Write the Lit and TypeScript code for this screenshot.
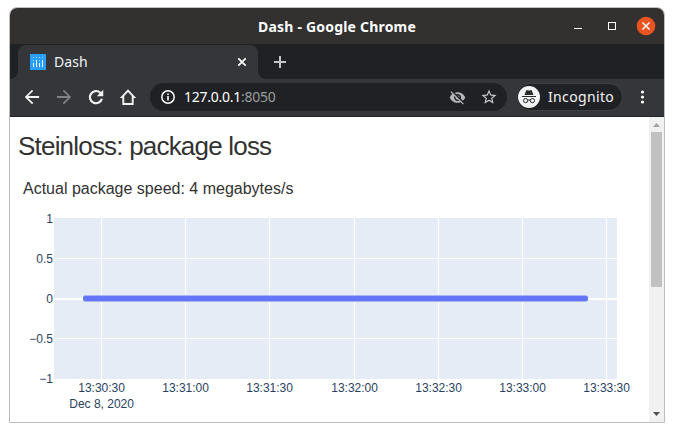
import { LitElement, html, css, svg } from "lit";
import { customElement } from "lit/decorators.js";

@customElement("loss-chart")
class LossChart extends LitElement {
  static styles = css`
    :host { display: block; }
    svg { display: block; }
    text { font: 12px "Liberation Sans", Arial, sans-serif; fill: #2a3f5f; }
    .mid { text-anchor: middle; }
    .end { text-anchor: end; }
    .plot { fill: #e5ecf6; }
    .grid { fill: #fff; }
    .trace { fill: #6376f7; }
    .halo { fill: #a9b5f7; }
  `;

  private xTicks = [
    { x: 91, label: "13:30:30" },
    { x: 175, label: "13:31:00" },
    { x: 259, label: "13:31:30" },
    { x: 344, label: "13:32:00" },
    { x: 428, label: "13:32:30" },
    { x: 512, label: "13:33:00" },
    { x: 596, label: "13:33:30" },
  ];

  private yTicks = [
    { y: 8, label: "1" },
    { y: 48, label: "0.5" },
    { y: 88, label: "0" },
    { y: 128, label: "−0.5" },
    { y: 168, label: "−1" },
  ];

  render() {
    return html`<svg width="639" height="210" viewBox="0 0 639 210">
      <rect class="plot" x="44" y="8" width="563" height="161"></rect>
      ${this.xTicks.map(
        (t) => svg`<rect class="grid" x=${t.x} y="8" width="1" height="161"></rect>
          <text class="mid" x=${t.x + 0.6} y="182">${t.label}</text>`
      )}
      ${this.yTicks.map(
        (t, i) => svg`${i > 0 && i < 4
            ? svg`<rect class="grid" x="44" y=${t.y} width="563" height=${i === 2 ? 2 : 1}></rect>`
            : null}
          <text class="end" x="43" y=${t.y + 4.5}>${t.label}</text>`
      )}
      <text class="mid" x="91.6" y="198">Dec 8, 2020</text>
      <rect class="halo" x="73" y="85" width="505" height="7" rx="3"></rect>
      <rect class="trace" x="73" y="86" width="505" height="5" rx="2"></rect>
    </svg>`;
  }
}

@customElement("app-root")
class AppRoot extends LitElement {
  static styles = css`
    * { box-sizing: border-box; }
    :host {
      display: block; width: 674px; height: 432px; padding: 7px 9px 9px;
      background: #fff; overflow: hidden; box-sizing: border-box;
      font-family: "Noto Sans", sans-serif;
    }
    svg { display: block; flex: none; }
    .window {
      width: 656px; height: 416px; border: 1px solid #bdbdbd;
      border-radius: 8px 8px 0 0; overflow: hidden; background: #fff;
      display: flex; flex-direction: column;
    }
    .titlebar {
      height: 36px; flex: none; background: #333030; color: #fff;
      display: grid; grid-template-columns: 1fr auto 1fr; align-items: center;
    }
    .title { grid-column: 2; font-weight: 700; font-size: 14px; letter-spacing: 0.2px; line-height: 20px; white-space: nowrap; padding-top: 2px; }
    .controls { justify-self: end; margin-right: 0; }
    .tabs { height: 35px; flex: none; background: #202124; display: flex; }
    .corner { width: 8px; background: #35363a; }
    .corner i { display: block; height: 35px; background: #202124; }
    .corner.left i { border-bottom-right-radius: 8px; }
    .corner.right i { border-bottom-left-radius: 8px; }
    .tab {
      width: 240px; background: #35363a; margin-top: 1px; height: 34px;
      border-radius: 8px 8px 0 0; display: flex; align-items: center;
      padding: 0 11px 0 12px; color: #f1f3f4;
    }
    .tabname { font-size: 14px; letter-spacing: 0.05px; margin-left: 8px; flex: 1; line-height: 20px; }
    .plus { margin: 11px 0 0 8px; }
    .toolbar {
      height: 38px; flex: none; background: #35363a; border-bottom: 1px solid #232427;
      display: flex; align-items: center; padding-bottom: 1px;
    }
    .nav { display: flex; gap: 12px; padding-left: 12px; width: 140px; }
    .address {
      width: 357px; height: 28px; border-radius: 14px; background: #202124;
      display: flex; align-items: center; padding: 0 9px 0 10px; color: #9aa0a6;
    }
    .url { font-size: 14px; letter-spacing: -0.25px; flex: 1; line-height: 20px; margin-left: 8px; color: #fff; }
    .port { color: #9a9c9f; }
    .star { margin-left: 14px; }
    .incognito {
      margin-left: 9px; width: 107px; height: 28px; border-radius: 14px;
      background: #202124; border: 1px solid #3f4044; color: #f1f3f4;
      display: flex; align-items: center; padding-left: 1px;
    }
    .label { font-size: 14px; letter-spacing: 0.35px; margin-left: 8px; line-height: 20px; }
    .menu { margin-left: 16px; }
    .body { flex: 1; display: flex; min-height: 0; }
    .page {
      flex: 1; min-width: 0; font-family: "Liberation Sans", Arial, sans-serif; color: #323232;
      display: flex; flex-direction: column;
    }
    h1 { margin: 0; padding: 13px 0 0 8px; font-size: 26px; font-weight: 400; letter-spacing: -0.8px; line-height: 32px; }
    p { margin: 0; padding: 16px 0 0 13px; font-size: 16px; line-height: 22px; height: 48px; }
    .scroll { width: 15px; background: #f1f1f1; display: flex; flex-direction: column; align-items: center; }
    .thumb { width: 11px; height: 155px; background: #c1c1c1; }
    .gap { flex: 1; }
  `;

  render() {
    return html`<div class="window">
      <div class="titlebar">
        <div class="title">Dash - Google Chrome</div>
        <svg class="controls" width="92" height="36" viewBox="0 0 92 36" fill="none">
          <path d="M2 20.5h8" stroke="#fff"></path>
          <rect x="36.5" y="14.5" width="7" height="7" stroke="#fff"></rect>
          <circle cx="74" cy="18" r="9.3" fill="#e95420"></circle>
          <path d="M70.5 14.5l7 7m0-7l-7 7" stroke="#fff" stroke-width="1.5"></path>
        </svg>
      </div>
      <div class="tabs">
        <div class="corner left"><i></i></div>
        <div class="tab">
          <svg width="16" height="16" viewBox="0 0 16 16">
            <path fill="#2b9dfa" d="M0 0h16v16H0z"></path>
            <path fill="#fff" d="M3 9h1v4H3zM6 6h1v7H6zM9 9h1v4H9zM12 6h1v7h-1z"></path>
            <path fill="#8fe6ff" d="M3 3h1v1H3zM6 3h1v1H6zM9 3h1v1H9zM12 3h1v1h-1zM3 6h1v1H3zM9 6h1v1H9z"></path>
          </svg>
          <span class="tabname">Dash</span>
          <svg width="10" height="10" viewBox="0 0 10 10" stroke="#fff" stroke-width="1.7">
            <path d="M1.3 1.3l7.4 7.4m0-7.4L1.3 8.7"></path>
          </svg>
        </div>
        <div class="corner right"><i></i></div>
        <svg class="plus" width="13" height="13" viewBox="0 0 13 13" stroke="#c3c5c7" stroke-width="2">
          <path d="M6 0v12M0 6h12" transform="translate(0 1)"></path>
        </svg>
      </div>
      <div class="toolbar">
        <div class="nav">
          <svg width="20" height="20" viewBox="0 0 24 24" fill="#f1f3f4"><path d="M20.5 10.8H7.3l6.1-5.9L12 3.3 3.3 12l8.7 8.7 1.6-1.6-6.1-5.9h13z"></path></svg>
          <svg width="20" height="20" viewBox="0 0 24 24" fill="#818286"><path d="M3.5 10.8h13.2l-6.1-5.9L12 3.3l8.7 8.7-8.7 8.7-1.6-1.6 6.1-5.9h-13z"></path></svg>
          <svg width="20" height="20" viewBox="0 0 24 24" fill="#f1f3f4"><path d="M18 6a8.6 8.6 0 1 0 2.4 8.2h-2.7A6 6 0 1 1 16.2 7.8L13 11h7.7V3.3z"></path></svg>
          <svg width="20" height="20" viewBox="0 0 24 24" fill="#f1f3f4" fill-rule="evenodd"><path d="M12 2.6L2.2 13.2H5.2v8.4h13.6v-8.4h3zM12 6l4.5 4.9v8.3h-9v-8.3z"></path></svg>
        </div>
        <div class="address">
          <svg width="16" height="16" viewBox="0 0 16 16" fill="none" stroke="#fff"><circle cx="8" cy="8" r="6.2" stroke-width="1.5"></circle><path d="M8 7v4.5M8 4.4v1.7" stroke-width="1.6"></path></svg>
          <span class="url">127.0.0.1<span class="port">:8050</span></span>
          <svg width="17" height="17" viewBox="0 0 24 24" fill="#b3b5b8"><path d="M12 7a5 5 0 0 1 5 5c0 .65-.13 1.26-.36 1.83l2.92 2.92A11.8 11.8 0 0 0 22.99 12C21.26 7.61 17 4.5 12 4.5c-1.4 0-2.74.25-3.98.7l2.16 2.16C10.74 7.13 11.35 7 12 7zM2 4.27l2.74 2.74A11.8 11.8 0 0 0 1 12c1.73 4.39 6 7.5 11 7.5 1.55 0 3.03-.3 4.38-.84L19.73 22 21 20.73 3.27 3zM7.53 9.8l1.55 1.55A3 3 0 0 0 12.66 14.92l1.55 1.55A5 5 0 0 1 7.53 9.8zm4.31-.78 3.15 3.15.02-.16a3 3 0 0 0-3-3z"></path></svg>
          <svg class="star" width="18" height="18" viewBox="0 0 24 24" fill="#c6c8ca"><path d="M22 9.24l-7.19-.62L12 2 9.19 8.63 2 9.24l5.46 4.73L5.82 21 12 17.27 18.18 21l-1.63-7.03zM12 15.4l-3.76 2.27 1-4.28-3.32-2.88 4.38-.38L12 6.1l1.71 4.04 4.38.38-3.32 2.88 1 4.28z"></path></svg>
        </div>
        <div class="incognito">
          <svg width="22" height="22" viewBox="0 0 22 22" fill="none">
            <circle cx="11" cy="11" r="11" fill="#f1f3f4"></circle>
            <path fill="#28292c" d="M6.5 9l1.6-4.3q.3-.8 1.2-.5l1.7.4 1.7-.4q.9-.3 1.2.5L15.5 9zM4 10h14v1H4z"></path>
            <path stroke="#28292c" d="M9.7 14.3q1.3-.9 2.6 0"></path>
            <circle cx="7.6" cy="14.6" r="2.1" stroke="#28292c"></circle><circle cx="14.4" cy="14.6" r="2.1" stroke="#28292c"></circle>
          </svg>
          <span class="label">Incognito</span>
        </div>
        <svg class="menu" width="6" height="16" viewBox="0 0 6 16" fill="#fff"><circle cx="3.5" cy="3" r="1.6"></circle><circle cx="3.5" cy="8" r="1.6"></circle><circle cx="3.5" cy="13" r="1.6"></circle></svg>
      </div>
      <div class="body">
        <div class="page">
          <h1>Steinloss: package loss</h1>
          <p>Actual package speed: 4 megabytes/s</p>
          <loss-chart></loss-chart>
        </div>
        <div class="scroll">
          <svg width="15" height="15" viewBox="0 0 15 15" fill="#a3a3a3"><path d="M4 10h7L7.5 6z"></path></svg>
          <div class="thumb"></div>
          <div class="gap"></div>
          <svg width="15" height="15" viewBox="0 0 15 15" fill="#505050"><path d="M4 5h7L7.5 9z"></path></svg>
        </div>
      </div>
    </div>`;
  }
}
